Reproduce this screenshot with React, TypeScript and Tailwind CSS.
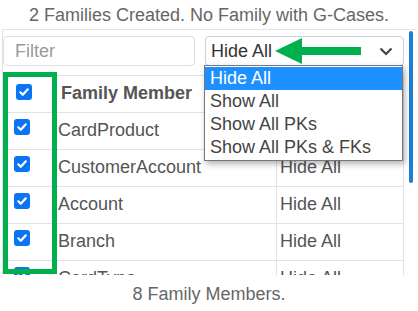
import React from "react";

const Check = ({ className = "" }: { className?: string }) => (
  <div className={"w-[16px] h-[16px] rounded-[3px] bg-[#0b74f5] flex items-center justify-center " + className}>
    <svg width="12" height="12" viewBox="0 0 12 12">
      <path d="M2.3 6.3 L4.8 8.8 L9.8 3.3" fill="none" stroke="#fff" strokeWidth="2.2" strokeLinecap="round" strokeLinejoin="round" />
    </svg>
  </div>
);

const rows = ["CardProduct", "CustomerAccount", "Account", "Branch", "CardType"];

export default function App() {
  return (
    <div className="w-[418px] h-[311px] bg-white relative overflow-hidden font-['Liberation_Sans',Arial,sans-serif] text-[18px]">
      <div className="h-[29px] pt-[5px] text-center text-[#666] leading-[21px]">
        2 Families Created. No Family with G-Cases.
      </div>
      <div className="relative ml-[2px] mr-[1px] h-[246px] border-t border-l border-[#e3e3e3] overflow-hidden">
        <div className="flex pt-[6px] h-[45px]">
          <div className="w-[192px] h-[30px] border border-[#dedede] rounded-[4px] flex items-center pl-[11px] text-[#9a9a9a]">
            Filter
          </div>
          <div className="ml-[10px] w-[199px] h-[30px] border border-[#cfcfcf] rounded-[4px] flex items-center justify-between pl-[5px] pr-[10px] text-[#333]">
            <span>Hide All</span>
            <svg width="14" height="9" viewBox="0 0 14 9">
              <path d="M1.5 1.5 L7 7 L12.5 1.5" fill="none" stroke="#444" strokeWidth="2.2" />
            </svg>
          </div>
        </div>
        <div className="w-[401px] border-r border-[#e3e3e3] text-[#555]">
          <div className="flex h-[37px] border-t border-[#e3e3e3]">
            <div className="w-[52px] border-r border-[#e3e3e3] pl-[13px] pt-[8px]">
              <Check />
            </div>
            <div className="w-[222px] border-r border-[#e3e3e3] pl-[6px] pt-[7px] font-bold leading-[21px]">Family Member</div>
            <div className="flex-1 pl-[3px] pt-[7px] leading-[21px]">Show</div>
          </div>
          {rows.map((r) => (
            <div key={r} className="flex h-[37px] border-t border-[#e3e3e3]">
              <div className="w-[52px] border-r border-[#e3e3e3] pl-[11px] pt-[6px]">
                <Check />
              </div>
              <div className="w-[222px] border-r border-[#e3e3e3] pl-[3px] pt-[7px] leading-[21px]">{r}</div>
              <div className="flex-1 pl-[3px] pt-[7px] leading-[21px]">Hide All</div>
            </div>
          ))}
        </div>
        <div className="absolute left-[406px] top-[1px] w-[4px] h-[152px] rounded-[2px] bg-[#1a7fd6]" />
      </div>
      <div className="pt-[9px] text-center text-[#666] leading-[21px]">8 Family Members.</div>

      {/* dropdown */}
      <div className="absolute left-[204px] top-[65px] w-[199px] h-[96px] bg-white border border-[#777] shadow-[2px_3px_6px_rgba(0,0,0,0.3)] text-[#444]">
        <div className="h-[23px] mt-[1px] bg-[#1e8fff] text-white pl-[5px] leading-[23px]">Hide All</div>
        <div className="h-[23px] pl-[5px] leading-[23px]">Show All</div>
        <div className="h-[23px] pl-[5px] leading-[23px]">Show All PKs</div>
        <div className="h-[23px] pl-[5px] leading-[23px]">Show All PKs &amp; FKs</div>
      </div>

      {/* green arrow */}
      <svg className="absolute left-[274px] top-[37px]" width="90" height="28" viewBox="0 0 90 28">
        <polygon points="1,14 28,1 28,10 87,10 87,18 28,18 28,27" fill="#00b04f" />
      </svg>

      {/* green highlight box */}
      <div className="absolute left-[3px] top-[72px] w-[54px] h-[202px] border-[5px] border-[#00b04f]" />
    </div>
  );
}
